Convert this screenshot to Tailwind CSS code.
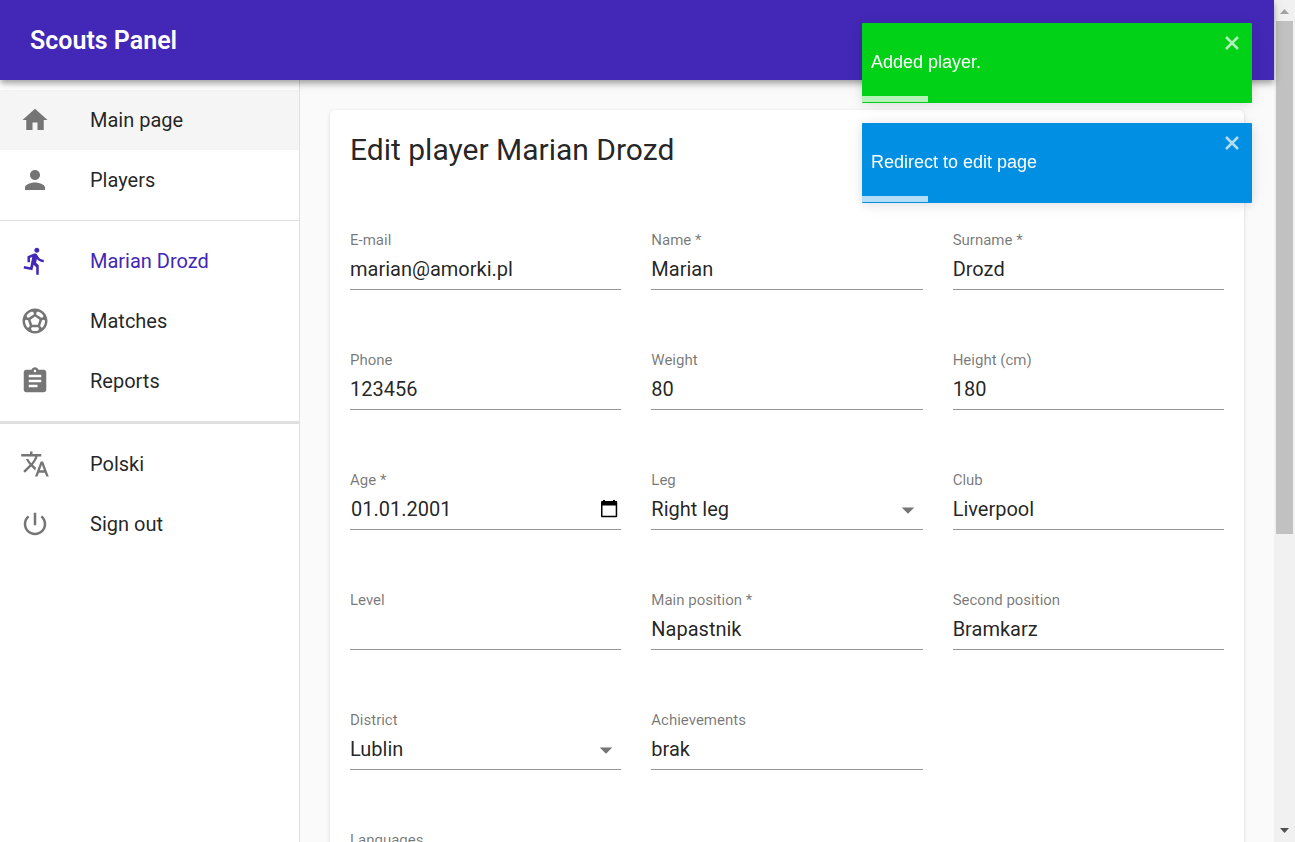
<!DOCTYPE html>
<html lang="en">
<head>
<meta charset="utf-8">
<meta name="viewport" content="width=device-width, initial-scale=1">
<title>Scouts Panel</title>
<script src="https://cdn.jsdelivr.net/npm/@tailwindcss/browser@4"></script>
</head>
<body class="flex h-screen overflow-hidden bg-[#fafafa] font-[Roboto,sans-serif] text-xl text-black/87">

<div class="flex min-w-0 flex-1 flex-col">
  <header class="z-10 flex h-20 shrink-0 items-center bg-[#4327b6] px-[30px] pt-0.5 shadow-[0_3px_5px_-1px_rgba(0,0,0,0.2),0_5px_6px_0_rgba(0,0,0,0.14),0_1px_12px_0_rgba(0,0,0,0.12)]">
    <a href="#" class="text-[25px] leading-10 font-semibold text-white">Scouts Panel</a>
  </header>

  <div class="flex min-h-0 flex-1">
    <nav class="w-[300px] shrink-0 border-r border-[#e0e0e0] bg-white" aria-label="Main">
      <ul class="border-b border-[#e0e0e0] py-2.5">
        <li><a href="#" class="flex h-[60px] items-center gap-10 bg-black/4 px-5">
          <svg class="size-[30px] fill-[#757575]" viewBox="0 0 24 24" aria-hidden="true"><path d="M10 20v-6h4v6h5v-8h3L12 3 2 12h3v8z"/></svg>Main page</a></li>
        <li><a href="#" class="flex h-[60px] items-center gap-10 px-5">
          <svg class="size-[30px] fill-[#757575]" viewBox="0 0 24 24" aria-hidden="true"><path d="M12 12c2.21 0 4-1.79 4-4s-1.79-4-4-4-4 1.79-4 4 1.79 4 4 4zm0 2c-2.67 0-8 1.34-8 4v2h16v-2c0-2.66-5.33-4-8-4z"/></svg>Players</a></li>
      </ul>
      <ul class="border-b-3 border-[#e0e0e0] py-2.5">
        <li><a href="#" aria-current="page" class="flex h-[60px] items-center gap-10 px-5 text-[#4327b6]">
          <svg class="size-[30px] fill-[#4327b6]" viewBox="0 0 24 24" aria-hidden="true"><path d="M13.49 5.48c1.1 0 2-.9 2-2s-.9-2-2-2-2 .9-2 2 .9 2 2 2zm-3.6 13.9l1-4.4 2.1 2v6h2v-7.5l-2.1-2 .6-3c1.3 1.5 3.3 2.5 5.5 2.5v-2c-1.9 0-3.5-1-4.3-2.4l-1-1.6c-.4-.6-1-1-1.7-1-.3 0-.5.1-.8.1l-5.2 2.2v4.7h2v-3.4l1.8-.7-1.6 8.1-4.9-1-.4 2 7 1.4z"/></svg>Marian Drozd</a></li>
        <li><a href="#" class="flex h-[60px] items-center gap-10 px-5">
          <svg class="size-[30px] fill-[#757575]" viewBox="0 0 24 24" aria-hidden="true"><path d="M12 2C6.48 2 2 6.48 2 12s4.48 10 10 10 10-4.48 10-10S17.52 2 12 2zm1 3.3l1.35-.95c1.82.56 3.37 1.76 4.38 3.34l-.39 1.34-1.35.46L13 6.7V5.3zm-3.35-.95L11 5.3v1.4L7.01 9.49l-1.35-.46-.39-1.34c1.01-1.57 2.56-2.77 4.38-3.34zM7.08 17.11l-1.14.1C4.73 15.81 4 13.99 4 12c0-.12.01-.23.02-.35l1-.73 1.38.48 1.46 4.34-.78 1.37zm7.42 2.48c-.79.26-1.63.41-2.5.41s-1.71-.15-2.5-.41l-.69-1.49.64-1.1h5.11l.64 1.11-.7 1.48zM14.27 15H9.73l-1.35-4.02L12 8.44l3.63 2.54L14.27 15zm3.79 2.21l-1.14-.1-.79-1.37 1.46-4.34 1.39-.47 1 .73c.01.11.02.22.02.34 0 1.99-.73 3.81-1.94 5.21z"/></svg>Matches</a></li>
        <li><a href="#" class="flex h-[60px] items-center gap-10 px-5">
          <svg class="size-[30px] fill-[#757575]" viewBox="0 0 24 24" aria-hidden="true"><path d="M19 3h-4.18C14.4 1.84 13.3 1 12 1c-1.3 0-2.4.84-2.82 2H5c-1.1 0-2 .9-2 2v14c0 1.1.9 2 2 2h14c1.1 0 2-.9 2-2V5c0-1.1-.9-2-2-2zm-7 0c.55 0 1 .45 1 1s-.45 1-1 1-1-.45-1-1 .45-1 1-1zm2 14H7v-2h7v2zm3-4H7v-2h10v2zm0-4H7V7h10v2z"/></svg>Reports</a></li>
      </ul>
      <ul class="py-2.5">
        <li><button type="button" class="flex h-[60px] w-full items-center gap-10 px-5">
          <svg class="size-[30px] fill-[#757575]" viewBox="0 0 24 24" aria-hidden="true"><path d="M12.87 15.07l-2.54-2.51.03-.03c1.74-1.94 2.98-4.17 3.71-6.53H17V4h-7V2H8v2H1v1.99h11.17C11.5 7.92 10.44 9.75 9 11.35 8.07 10.32 7.3 9.19 6.69 8h-2c.73 1.63 1.73 3.17 2.98 4.56l-5.09 5.02L4 19l5-5 3.11 3.11.76-2.04zM18.5 10h-2L12 22h2l1.12-3h4.75L21 22h2l-4.5-12zm-2.62 7l1.62-4.33L19.12 17h-3.24z"/></svg>Polski</button></li>
        <li><button type="button" class="flex h-[60px] w-full items-center gap-10 px-5">
          <svg class="size-[30px] fill-[#757575]" viewBox="0 0 24 24" aria-hidden="true"><path d="M13 3h-2v10h2V3zm4.83 2.17l-1.42 1.42C17.99 7.86 19 9.81 19 12c0 3.87-3.13 7-7 7s-7-3.13-7-7c0-2.19 1.01-4.14 2.58-5.42L6.17 5.17C4.23 6.82 3 9.26 3 12c0 4.97 4.03 9 9 9s9-4.03 9-9c0-2.74-1.23-5.18-3.17-6.83z"/></svg>Sign out</button></li>
      </ul>
    </nav>

    <main class="min-w-0 flex-1 overflow-hidden p-[30px]">
      <section class="rounded-[5px] bg-white p-5 shadow-[0_2px_1px_-1px_rgba(0,0,0,0.2),0_1px_1px_0_rgba(0,0,0,0.14),0_1px_4px_0_rgba(0,0,0,0.12)]">
        <h1 class="text-3xl leading-10">Edit player Marian Drozd</h1>
        <form class="mt-[60px] grid grid-cols-3 gap-x-[30px] gap-y-[60px]">
          <div class="flex h-[60px] flex-col">
            <label for="email" class="text-[15px] leading-5 text-black/54">E-mail</label>
            <input id="email" type="email" value="marian@amorki.pl" class="w-full flex-1 border-b border-[#949494] pb-0.5 outline-none">
          </div>
          <div class="flex h-[60px] flex-col">
            <label for="name" class="text-[15px] leading-5 text-black/54">Name *</label>
            <input id="name" type="text" value="Marian" class="w-full flex-1 border-b border-[#949494] pb-0.5 outline-none">
          </div>
          <div class="flex h-[60px] flex-col">
            <label for="surname" class="text-[15px] leading-5 text-black/54">Surname *</label>
            <input id="surname" type="text" value="Drozd" class="w-full flex-1 border-b border-[#949494] pb-0.5 outline-none">
          </div>

          <div class="flex h-[60px] flex-col">
            <label for="phone" class="text-[15px] leading-5 text-black/54">Phone</label>
            <input id="phone" type="tel" value="123456" class="w-full flex-1 border-b border-[#949494] pb-0.5 outline-none">
          </div>
          <div class="flex h-[60px] flex-col">
            <label for="weight" class="text-[15px] leading-5 text-black/54">Weight</label>
            <input id="weight" type="text" inputmode="numeric" value="80" class="w-full flex-1 border-b border-[#949494] pb-0.5 outline-none">
          </div>
          <div class="flex h-[60px] flex-col">
            <label for="height" class="text-[15px] leading-5 text-black/54">Height (cm)</label>
            <input id="height" type="text" inputmode="numeric" value="180" class="w-full flex-1 border-b border-[#949494] pb-0.5 outline-none">
          </div>

          <div class="flex h-[60px] flex-col">
            <label for="age" class="text-[15px] leading-5 text-black/54">Age *</label>
            <div class="flex flex-1 items-center border-b border-[#949494] pr-[3px] pb-0.5">
              <input id="age" type="text" value="01.01.2001" class="min-w-0 flex-1 pl-px outline-none">
              <button type="button" aria-label="Open calendar">
                <svg class="h-5 w-[18px]" viewBox="0 0 18 20" aria-hidden="true"><path fill-rule="evenodd" d="M3 1h2v1h8V1h2v1h1.200a1 1 0 0 1 1 1v14.200a1 1 0 0 1-1 1H2a1 1 0 0 1-1-1V3a1 1 0 0 1 1-1h1zM2.500 6.500v10.300h13.200V6.500z"/></svg>
              </button>
            </div>
          </div>
          <div class="flex h-[60px] flex-col">
            <label for="leg" class="text-[15px] leading-5 text-black/54">Leg</label>
            <div class="relative flex flex-1 border-b border-[#949494]">
              <select id="leg" class="w-full appearance-none pb-0.5 outline-none"><option>Right leg</option><option>Left leg</option></select>
              <svg class="pointer-events-none absolute top-[5px] right-0 size-[30px] fill-[#757575]" viewBox="0 0 24 24" aria-hidden="true"><path d="M7 10l5 5 5-5z"/></svg>
            </div>
          </div>
          <div class="flex h-[60px] flex-col">
            <label for="club" class="text-[15px] leading-5 text-black/54">Club</label>
            <input id="club" type="text" value="Liverpool" class="w-full flex-1 border-b border-[#949494] pb-0.5 outline-none">
          </div>

          <div class="flex h-[60px] flex-col">
            <label for="level" class="text-[15px] leading-5 text-black/54">Level</label>
            <input id="level" type="text" class="w-full flex-1 border-b border-[#949494] pb-0.5 outline-none">
          </div>
          <div class="flex h-[60px] flex-col">
            <label for="main-position" class="text-[15px] leading-5 text-black/54">Main position *</label>
            <input id="main-position" type="text" value="Napastnik" class="w-full flex-1 border-b border-[#949494] pb-0.5 outline-none">
          </div>
          <div class="flex h-[60px] flex-col">
            <label for="second-position" class="text-[15px] leading-5 text-black/54">Second position</label>
            <input id="second-position" type="text" value="Bramkarz" class="w-full flex-1 border-b border-[#949494] pb-0.5 outline-none">
          </div>

          <div class="flex h-[60px] flex-col">
            <label for="district" class="text-[15px] leading-5 text-black/54">District</label>
            <div class="relative flex flex-1 border-b border-[#949494]">
              <select id="district" class="w-full appearance-none pb-0.5 outline-none"><option>Lublin</option></select>
              <svg class="pointer-events-none absolute top-[5px] right-0 size-[30px] fill-[#757575]" viewBox="0 0 24 24" aria-hidden="true"><path d="M7 10l5 5 5-5z"/></svg>
            </div>
          </div>
          <div class="flex h-[60px] flex-col">
            <label for="achievements" class="text-[15px] leading-5 text-black/54">Achievements</label>
            <input id="achievements" type="text" value="brak" class="w-full flex-1 border-b border-[#949494] pb-0.5 outline-none">
          </div>

          <div class="col-start-1 flex h-[60px] flex-col">
            <label for="languages" class="text-[15px] leading-5 text-black/54">Languages</label>
            <input id="languages" type="text" class="w-full flex-1 border-b border-[#949494] pb-0.5 outline-none">
          </div>
        </form>
      </section>
    </main>
  </div>
</div>

<!-- Scrollbar -->
<div class="flex w-[21px] shrink-0 flex-col items-center bg-[#f1f1f1]" aria-hidden="true">
  <svg class="h-[21px] w-[21px] shrink-0 fill-[#a3a3a3]" viewBox="0 0 21 21"><path d="M6 14l4.500-5 4.500 5z"/></svg>
  <div class="min-h-0 w-[17px] flex-[513] bg-[#c1c1c1]"></div>
  <div class="min-h-0 flex-[287]"></div>
  <svg class="h-[21px] w-[21px] shrink-0 fill-[#505050]" viewBox="0 0 21 21"><path d="M6 7l4.500 5 4.500-5z"/></svg>
</div>

<!-- Notifications -->
<div class="fixed top-[23px] right-[43px] z-20 flex w-[390px] flex-col gap-5 font-['Liberation_Sans',Arial,sans-serif] text-lg text-white">
  <div role="status" class="relative flex h-20 items-center rounded-[1px] bg-[#01d217] px-[9px] pb-0.5 shadow-[0_1px_12px_0_rgba(0,0,0,0.1),0_3px_18px_0_rgba(0,0,0,0.05)]">
    <p>Added player.</p>
    <button type="button" aria-label="Close" class="absolute top-2.5 right-2.5">
      <svg class="size-5 stroke-white/70" viewBox="0 0 20 20" fill="none" stroke-width="2.500" aria-hidden="true"><path d="M4 4l12 12M16 4L4 16"/></svg>
    </button>
    <div class="absolute bottom-px left-0 h-1.5 w-[17%] bg-white/70"></div>
  </div>
  <div role="status" class="relative flex h-20 items-center rounded-[1px] bg-[#008fe2] px-[9px] pb-0.5 shadow-[0_1px_12px_0_rgba(0,0,0,0.1),0_3px_18px_0_rgba(0,0,0,0.05)]">
    <p>Redirect to edit page</p>
    <button type="button" aria-label="Close" class="absolute top-2.5 right-2.5">
      <svg class="size-5 stroke-white/70" viewBox="0 0 20 20" fill="none" stroke-width="2.500" aria-hidden="true"><path d="M4 4l12 12M16 4L4 16"/></svg>
    </button>
    <div class="absolute bottom-px left-0 h-1.5 w-[17%] bg-white/70"></div>
  </div>
</div>

</body>
</html>
